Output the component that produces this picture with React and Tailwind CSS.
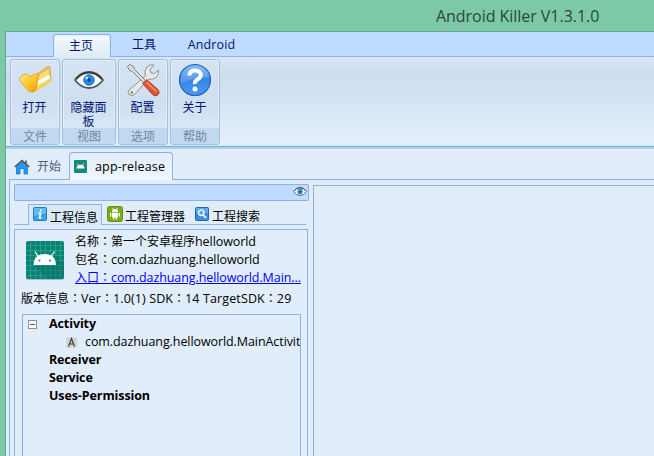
import React from "react";

const Colon = () => (
  <span className="inline-block w-3 text-center font-['Noto_Sans_CJK_TC',sans-serif] text-[12px] leading-none tracking-normal" lang="zh-TW">：</span>
);

function FolderIcon() {
  return (
    <svg width="34" height="32" viewBox="0 0 34 32">
      <defs>
        <linearGradient id="gold" x1="0" y1="0" x2="1" y2="1">
          <stop offset="0" stopColor="#ffec9a" />
          <stop offset="0.5" stopColor="#fdc92c" />
          <stop offset="1" stopColor="#e89c08" />
        </linearGradient>
      </defs>
      <path d="M15 13 30 2.500Q32 2 32 4L33 17 18 27Z" fill="#eac45a" stroke="#c99a28" strokeWidth=".7" />
      <path d="M17 14 31 5V10L17 22Z" fill="#f9dc80" />
      <path d="M16 19 31.500 10.500 32.500 16 17 26Z" fill="#fffdf4" />
      <path d="M17 23 32.500 14 32.500 18 18 27.500Z" fill="#f9d45c" />
      <path d="M1.500 16Q1 14 3 12.500L6 10.500Q8 9 10 11L12 12.500 18 9.500Q21 9 20.500 12L18 26 15.500 28Q12 28.500 10 26.500Z" fill="url(#gold)" stroke="#d99a14" strokeWidth=".7" />
    </svg>
  );
}

function EyeIcon({ w, h }) {
  return (
    <svg width={w} height={h} viewBox="0 0 30 18" preserveAspectRatio="none">
      <path d="M1 9Q7 1 15 1T29 9Q23 17 15 17T1 9Z" fill="#f8fbfd" stroke="#555" strokeWidth="1.800" />
      <path d="M2 8Q8 1.500 15 1.500T28 8" fill="none" stroke="#3c3c3c" strokeWidth="2" />
      <circle cx="15" cy="9" r="5.300" fill="#1c8fe8" stroke="#1766ae" strokeWidth=".8" />
      <circle cx="15" cy="9" r="1.700" fill="#0b3566" />
      <circle cx="12.800" cy="7" r="1.400" fill="#bfe6ff" />
    </svg>
  );
}

function ToolsIcon() {
  return (
    <svg width="34" height="34" viewBox="0 0 34 34">
      <path d="M3 27 19.500 13Q17.500 8 21 4Q24 1 28 2L24 6.500 25 10 28.500 10.500 32.500 7Q33.500 11 30 14.500Q26.500 17.500 22.500 16L9 31Q6 34 3 31.500Q1 29.500 3 27Z" fill="#e9e9e9" stroke="#909090" strokeWidth="1" />
      <circle cx="5.800" cy="29.500" r="1.200" fill="#777" />
      <path d="M1.500 3.500 3.500 1.500 7.500 3.500 8.500 6.500 20 18 18 20 6.500 8.500 3.500 7.500Z" fill="#dedede" stroke="#777" strokeWidth=".9" />
      <path d="M16.500 20.500 20.500 16.500 32 26.500Q34.500 30 31.700 32Q29.500 34 26.500 31.500Z" fill="#dc5431" stroke="#a53a20" strokeWidth=".8" />
      <path d="M20.500 19.500 30.500 28.500" stroke="#f59b80" strokeWidth="1.500" />
    </svg>
  );
}

function HelpIcon() {
  return (
    <svg width="34" height="34" viewBox="0 0 34 34">
      <defs>
        <linearGradient id="ball" x1="0" y1="0" x2="0" y2="1">
          <stop offset="0" stopColor="#6db0f5" />
          <stop offset="0.5" stopColor="#3685e4" />
          <stop offset="1" stopColor="#4a9bf4" />
        </linearGradient>
      </defs>
      <circle cx="17" cy="17" r="15.500" fill="url(#ball)" stroke="#2762bc" strokeWidth="1.200" />
      <path d="M3 17Q3 3 17 3T31 14Q18 14 3 20Z" fill="#fff" opacity=".18" />
      <path d="M11.300 12.500Q11.500 7.500 17 7.500T22.800 12Q22.800 14.500 19.500 16.500T17 21" fill="none" stroke="#fff" strokeWidth="4" />
      <circle cx="17" cy="26" r="2.500" fill="#fff" />
    </svg>
  );
}

function HomeIcon() {
  return (
    <svg width="16" height="16" viewBox="0 0 16 16" className="shrink-0">
      <path d="M11 1.500H13V5H11Z" fill="#777" />
      <path d="M2.500 7.500 8 2.500 13.500 7.500V15H10V9.500H6V15H2.500Z" fill="#1b9cf5" stroke="#1479cc" strokeWidth=".8" />
      <path d="M.7 8 8 1.500 15.300 8" fill="none" stroke="#505050" strokeWidth="1.400" />
    </svg>
  );
}

function AppIcon() {
  return (
    <svg width="40" height="42" viewBox="0 0 40 42">
      <rect x="1" y="2" width="38" height="38" rx="2" fill="#8aa9af" opacity=".7" />
      <rect x="1" y="1" width="38" height="38" rx="2" fill="#078574" />
      <path d="M5.500 1V39M10.500 1V39M15.500 1V39M20.500 1V39M25.500 1V39M30.500 1V39M35.500 1V39M1 5.500H39M1 10.500H39M1 15.500H39M1 20.500H39M1 25.500H39M1 30.500H39M1 35.500H39" stroke="#45a295" strokeWidth=".6" />
      <path d="M28 13 39 24V37Q39 39 37 39H23L8 25H31Z" fill="#046c60" opacity=".4" />
      <path d="M10 11.500 13 16M29.500 11.500 26.500 16" stroke="#fff" strokeWidth="1.200" />
      <path d="M8.500 25Q9 14 19.700 14T31 25Z" fill="#fff" />
      <circle cx="14.500" cy="20.500" r="1" fill="#078574" />
      <circle cx="25" cy="20.500" r="1" fill="#078574" />
    </svg>
  );
}

function SmallAppIcon() {
  return (
    <svg width="13" height="13" viewBox="0 0 13 13" className="shrink-0">
      <rect width="13" height="13" rx="1" fill="#158b7b" />
      <path d="M2.500 8.500Q2.800 4.800 6.500 4.800T10.500 8.500Z" fill="#fff" />
      <path d="M3.500 3.500 4.500 5.500M9.500 3.500 8.500 5.500" stroke="#fff" strokeWidth=".8" />
    </svg>
  );
}

function InfoIcon() {
  return (
    <svg width="14" height="14" viewBox="0 0 14 14" className="shrink-0">
      <rect x=".5" y=".5" width="13" height="13" rx="1" fill="#36a4e4" stroke="#237cb5" />
      <path d="M1 1H13V6L1 9Z" fill="#79cdf5" opacity=".6" />
      <path d="M7.800 2.500V4.300M5.800 6H7.500L6.500 11H8.500" stroke="#fff" strokeWidth="1.600" fill="none" />
    </svg>
  );
}

function RobotIcon() {
  return (
    <svg width="16" height="16" viewBox="0 0 16 16" className="shrink-0">
      <rect x=".5" y=".5" width="15" height="15" rx="2" fill="#7da91a" stroke="#65900d" />
      <path d="M5 6Q5 3 8 3T11 6ZM5 6.700H11V11.500H5ZM3 7H4.300V10.500H3ZM11.700 7H13V10.500H11.700ZM6 11H7.300V13.500H6ZM8.700 11H10V13.500H8.700Z" fill="#fff" />
      <path d="M5.500 2 6.500 4M10.500 2 9.500 4" stroke="#fff" strokeWidth=".8" />
    </svg>
  );
}

function SearchIcon() {
  return (
    <svg width="14" height="14" viewBox="0 0 14 14" className="shrink-0">
      <rect x=".5" y=".5" width="13" height="13" rx="1" fill="#3d8ee0" stroke="#2468b4" />
      <path d="M1 1H13V6H1Z" fill="#7fbcf5" opacity=".6" />
      <circle cx="6.200" cy="5.800" r="2.700" fill="#5aa4ea" stroke="#fff" strokeWidth="1.300" />
      <path d="M8.300 8 11 10.800" stroke="#fff" strokeWidth="1.700" />
    </svg>
  );
}

function Group({ width, icon, label, name }) {
  return (
    <div className={`${width} flex h-[86px] flex-col overflow-hidden rounded-[3px] border border-[#a3c0e0] bg-linear-to-b from-[#d6e4f3] via-[#cfdff1] to-[#dfebf8] shadow-[inset_0_0_0_1px_#e2edf8]`}>
      <div className="flex h-[38px] shrink-0 items-center justify-center pt-0.5">{icon}</div>
      <div className="h-[30px] shrink-0 whitespace-pre-line pr-px pt-[3px] text-center leading-[14px] text-[#00156e]">{label}</div>
      <div className="flex-1 bg-[#c1d8f0] text-center leading-[17px] text-[#75869f]">{name}</div>
    </div>
  );
}

export default function App() {
  return (
    <div className="flex h-[456px] w-[654px] flex-col overflow-hidden whitespace-nowrap bg-[#7dc9a7] font-['Open_Sans','Noto_Sans_CJK_SC',sans-serif] text-[12px] text-black" lang="zh-CN">
      <header className="h-[31px] shrink-0 pl-[436px] text-[16px] leading-[32px] tracking-[-0.04px] text-[#28483a]">Android Killer V1.3.1.0</header>
      <div className="ml-[5px] flex min-h-0 flex-1 flex-col border-l border-t border-[#63a988] bg-[#e1edfb]">
        <nav className="flex h-[25px] shrink-0 items-end border-b border-[#8db2e3] bg-[#bfdbff] pl-[47px] text-[#00156e]">
          <div className="-mb-px h-[23px] w-[58px] rounded-t-[3px] border border-b-0 border-[#8db2e3] bg-linear-to-b from-[#f4f9ff] to-[#dfe9f5] pr-0.5 text-center leading-[22px] shadow-[inset_0_0_0_1px_#d6f5fd]">主页</div>
          <div className="w-[66px] text-center leading-[22px]">工具</div>
          <div className="h-[23px] w-[69px] text-center text-[12.500px] leading-[24px] tracking-[0.1px]">Android</div>
        </nav>
        <section className="flex h-[89px] shrink-0 gap-0.5 border-b border-[#c0f1fb] bg-linear-to-b from-[#dbe6f4] via-[#cbddef] via-20% to-[#e4effd] pl-1 pt-0.5">
          <Group width="w-[50px]" icon={<FolderIcon />} label="打开" name="文件" />
          <Group width="w-[54px]" icon={<EyeIcon w={30} h={18} />} label={"隐藏面\n板"} name="视图" />
          <Group width="w-[50px]" icon={<ToolsIcon />} label="配置" name="选项" />
          <Group width="w-[50px]" icon={<HelpIcon />} label="关于" name="帮助" />
        </section>
        <div className="h-[3px] shrink-0 border-t border-[#89a8ca] bg-[#b1cdec]" />
        <div className="flex h-[31px] shrink-0 items-end pl-[3px]">
          <div className="flex h-[31px] w-[60px] items-center border-b border-[#8db2e3] pl-[5px] pt-[5px] text-[#4d6185]">
            <HomeIcon /><span className="ml-[7px]">开始</span>
          </div>
          <div className="flex h-[28px] w-[104px] items-center rounded-t-[4px] border border-b-0 border-[#8db2e3] bg-linear-to-b from-[#e0edfb] to-[#f0f6fe] pl-1">
            <SmallAppIcon /><span className="ml-2 pt-px text-[12.500px] tracking-[0.15px]">app-release</span>
          </div>
          <div className="h-px flex-1 bg-[#8db2e3]" />
        </div>
        <main className="ml-[3px] flex min-h-0 flex-1 border-l border-[#8db2e3] pl-1">
          <aside className="flex w-[295px] flex-col pt-1">
            <div className="flex h-[17px] w-[295px] shrink-0 items-center justify-end rounded-[1px] border border-[#8db2e3] bg-[#bfdbff] pb-[3px] pr-px"><EyeIcon w={14} h={9} /></div>
            <div className="mt-[3px] flex h-[21px] w-[292px] shrink-0 items-end">
              <div className="h-px w-[14px] bg-[#8db2e3]" />
              <div className="flex h-[21px] w-[74px] items-center gap-[3px] border border-b-0 border-[#8db2e3] bg-[#d9e8f9] pl-1"><div className="pb-0.5"><InfoIcon /></div><span className="pt-[5px] leading-4">工程信息</span></div>
              <div className="flex h-[21px] w-[87px] items-center gap-0.5 border-b border-[#8db2e3] pl-[5px]"><RobotIcon /><span className="pt-[6px] leading-4">工程管理器</span></div>
              <div className="flex h-[21px] flex-1 items-center gap-[3px] border-b border-[#8db2e3] pl-[6px]"><SearchIcon /><span className="pt-[6px] leading-4">工程搜索</span></div>
            </div>
            <div className="mt-1 flex min-h-0 w-[294px] flex-1 flex-col border border-b-0 border-[#8db2e3]">
              <div className="flex h-[57px] shrink-0 pl-[10px] pt-[3px]">
                <div className="w-[50px] pt-[7px]"><AppIcon /></div>
                <div className="text-[12.500px] leading-[18px]">
                  <div className="h-[18px]"><span className="text-[12px]">名称<Colon />第一个安卓程序</span><span className="tracking-[-0.08px]">helloworld</span></div>
                  <div className="h-[18px]"><span className="text-[12px]">包名<Colon /></span><span className="tracking-[-0.08px]">com.dazhuang.helloworld</span></div>
                  <div className="h-[18px] text-[#0000ff] underline"><span className="text-[12px]">入口<span className="font-['Noto_Sans_CJK_TC',sans-serif] leading-none" lang="zh-TW">：</span></span><span className="tracking-[-0.09px]">com.dazhuang.helloworld.Main...</span></div>
                </div>
              </div>
              <div className="h-[27px] shrink-0 pl-[6px] pt-[3px] text-[12.500px] leading-[18px] tracking-[0.12px]"><span className="text-[12px] tracking-normal">版本信息</span><Colon />Ver<Colon />1.0(1) SDK<Colon />14 TargetSDK<Colon />29</div>
              <div className="ml-[7px] mr-[6px] flex-1 overflow-hidden border border-b-0 border-[#8db2e3] text-[12.500px] leading-[18px]">
                <div className="flex h-[18px] items-center pl-[5px]">
                  <svg width="9" height="9" viewBox="0 0 9 9" className="shrink-0"><rect x=".5" y=".5" width="8" height="8" fill="#f8f8f8" stroke="#919191" /><path d="M2 4.500H7" stroke="#4458a5" /></svg>
                  <b className="ml-3 tracking-[-0.1px]">Activity</b>
                </div>
                <div className="flex h-[18px] items-center pl-[43px]">
                  <svg width="11" height="11" viewBox="0 0 11 11" className="shrink-0"><rect width="11" height="11" rx="1" fill="#d5d5d5" /><path d="M2.500 9.500 5.500 1.500 8.500 9.500M3.500 7H7.500" fill="none" stroke="#3c3c3c" strokeWidth="1.200" /></svg>
                  <span className="ml-2 tracking-[-0.08px]">com.dazhuang.helloworld.MainActivit</span>
                </div>
                <div className="pl-[26px] font-bold tracking-[-0.15px]">Receiver</div>
                <div className="pl-[26px] font-bold tracking-[-0.15px]">Service</div>
                <div className="pl-[26px] font-bold tracking-[-0.1px]">Uses-Permission</div>
              </div>
            </div>
          </aside>
          <div className="ml-1 mt-[5px] flex-1 border-l border-t border-[#8db2e3]" />
        </main>
      </div>
    </div>
  );
}
